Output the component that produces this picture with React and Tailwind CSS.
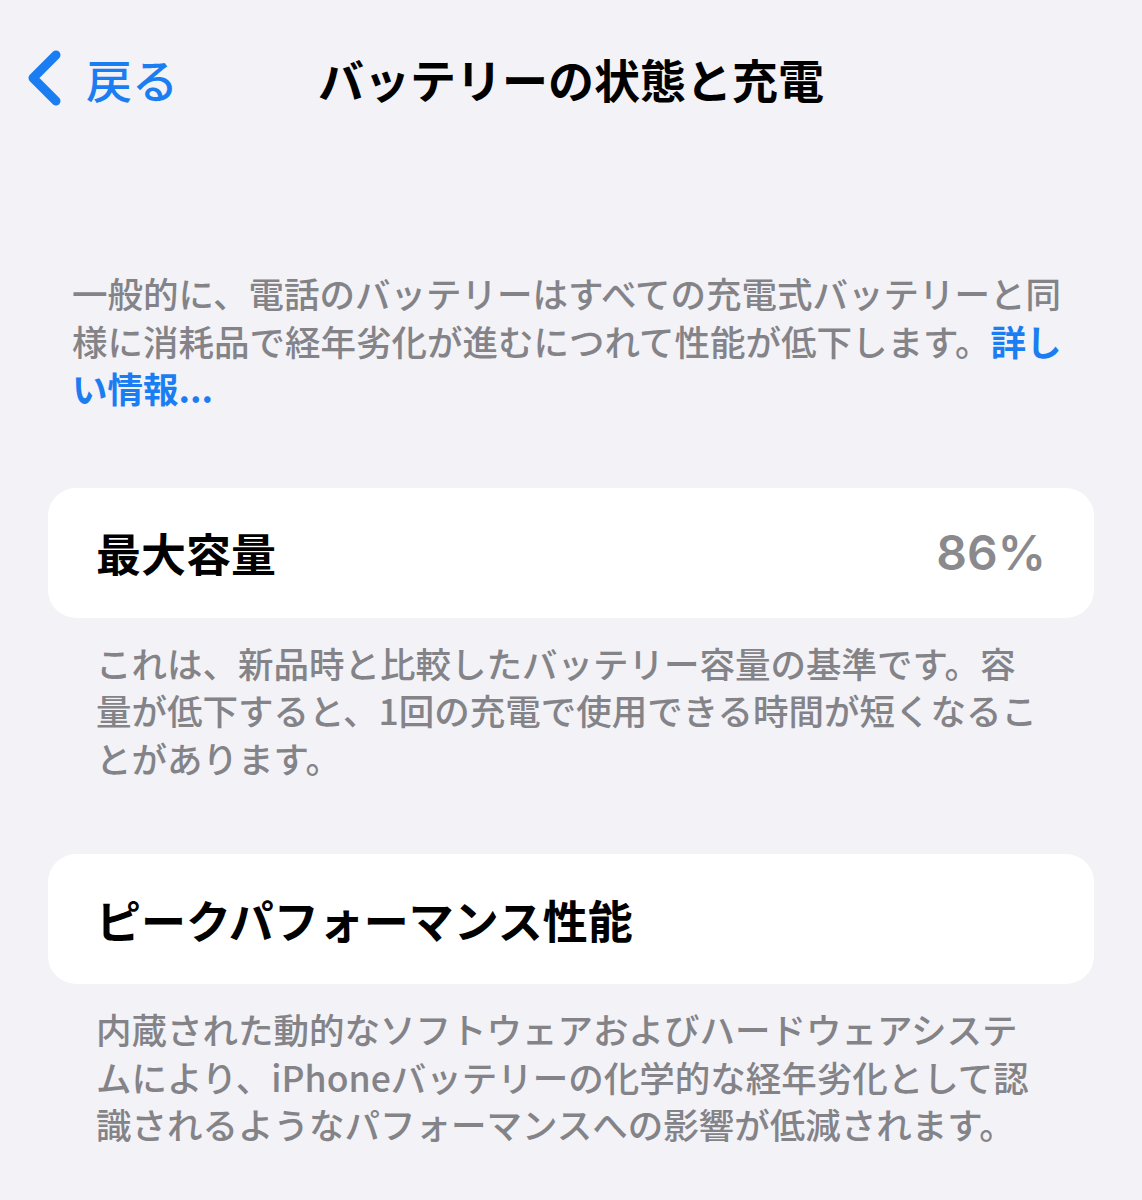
import React from "react";

const jp = { fontFamily: '"Noto Sans CJK JP", "Noto Sans", sans-serif' };

function BackChevron() {
  return (
    <svg width="40" height="56" viewBox="0 0 40 56" fill="none">
      <polyline
        points="32,5 9,28 32,51"
        stroke="#1a7ef2"
        strokeWidth="9"
        strokeLinecap="round"
        strokeLinejoin="round"
      />
    </svg>
  );
}

function Card({ label, value }) {
  return (
    <div className="mx-[48px] h-[130px] rounded-[28px] bg-white px-[48px] flex items-center justify-between">
      <span className="text-[45px] font-bold text-black leading-none">{label}</span>
      {value && (
        <span
          className="text-[48px] font-semibold text-[#8a8a8e] leading-none"
          style={{ fontFamily: '"Inter", "Noto Sans", sans-serif' }}
        >
          {value}
        </span>
      )}
    </div>
  );
}

export default function App() {
  return (
    <div className="w-[1142px] h-[1200px] bg-[#f2f2f7] overflow-hidden" style={jp}>
      {/* nav bar */}
      <div className="pt-[50px] grid grid-cols-[1fr_auto_1fr] items-center h-[106px]">
        <div className="flex items-center pl-[24px] gap-[22px]">
          <BackChevron />
          <span className="text-[46px] font-medium text-[#1a7ef2] leading-none">戻る</span>
        </div>
        <h1 className="text-[46px] font-bold text-black leading-none">バッテリーの状態と充電</h1>
        <div />
      </div>

      {/* intro */}
      <p className="mt-[163px] pl-[72px] text-[35.5px] leading-[47.5px] font-medium text-[#838388]">
        一般的に、電話のバッテリーはすべての充電式バッテリーと同
        <br />
        様に消耗品で経年劣化が進むにつれて性能が低下します。
        <span className="text-[#1a7ef2] font-bold">
          詳し
          <br />
          い情報...
        </span>
      </p>

      <div className="mt-[76px]">
        <Card label="最大容量" value="86%" />
      </div>
      <p className="mt-[21px] pl-[96px] text-[35.5px] leading-[47.5px] font-medium text-[#838388]">
        これは、新品時と比較したバッテリー容量の基準です。容
        <br />
        量が低下すると、1回の充電で使用できる時間が短くなるこ
        <br />
        とがあります。
      </p>

      <div className="mt-[73px]">
        <Card label="ピークパフォーマンス性能" />
      </div>
      <p className="mt-[21px] pl-[96px] text-[35.5px] leading-[47.5px] font-medium text-[#838388]">
        内蔵された動的なソフトウェアおよびハードウェアシステ
        <br />
        ムにより、iPhoneバッテリーの化学的な経年劣化として認
        <br />
        識されるようなパフォーマンスへの影響が低減されます。
      </p>
    </div>
  );
}
